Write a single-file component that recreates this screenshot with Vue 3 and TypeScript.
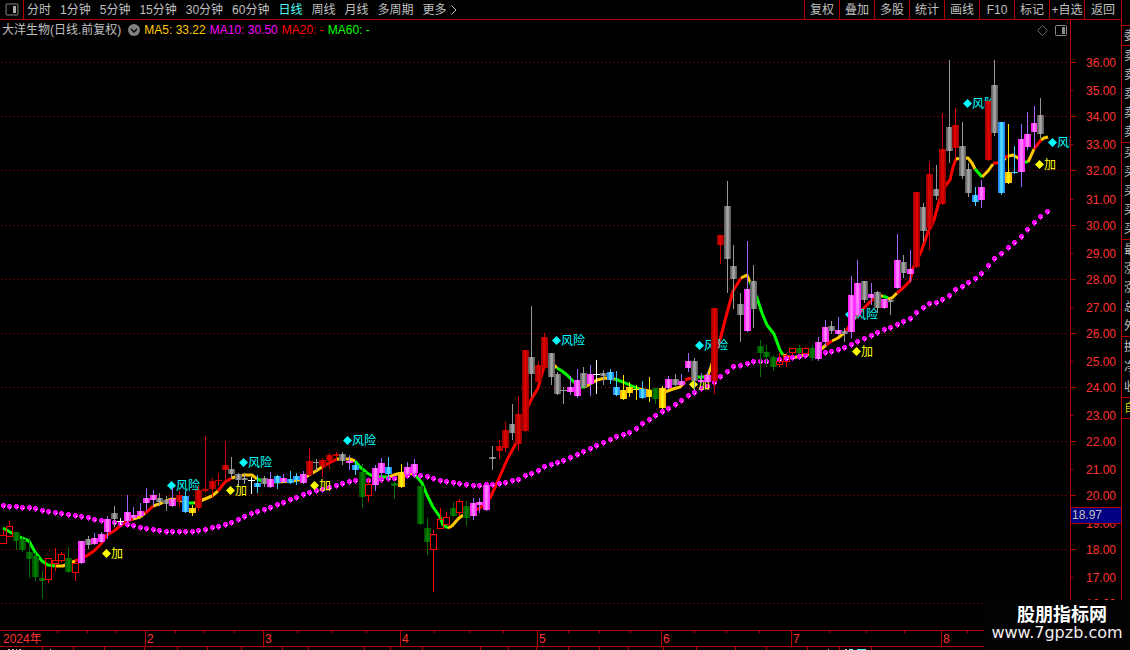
<script setup lang="ts">
type Kind = 'g' | 'r' | 'm' | 'b' | 'y' | 'd' | 'h' | 'w'
type Candle = [x: number, high: number, top: number, bottom: number, low: number, kind: Kind]

const periods = ['分时', '1分钟', '5分钟', '15分钟', '30分钟', '60分钟', '日线', '周线', '月线', '多周期']
const tools = ['复权', '叠加', '多股', '统计', '画线', 'F10', '标记', '+自选', '返回']
const averages = [
  { text: 'MA5: 33.22', tone: 'gold' },
  { text: 'MA10: 30.50', tone: 'magenta' },
  { text: 'MA20: -', tone: 'red' },
  { text: 'MA60: -', tone: 'green' },
]
const quoteGroups = [
  { size: 'one', rows: ['委比'] },
  { size: 'five', rows: ['卖五', '卖四', '卖三', '卖二', '卖一'] },
  { size: 'five', rows: ['买一', '买二', '买三', '买四', '买五'] },
  { size: 'five', rows: ['最新', '涨跌', '涨幅', '总量', '外盘'] },
  { size: 'three', rows: ['换手', '净资', '收益'] },
  { size: 'own', rows: ['自选'] },
]

const gridYs = [62, 116, 170, 225, 279, 333, 387, 441, 495, 549, 603]
const labelYs = [62, 90, 116, 144, 170, 199, 225, 253, 279, 307, 333, 361, 387, 415, 441, 469, 495, 523, 549, 577, 603]
const priceLabels = labelYs.map((y, i) => ({ y, text: (36 - i).toFixed(2), major: i % 2 === 0 }))

const months = [
  { x: 145, text: '2' },
  { x: 263, text: '3' },
  { x: 400, text: '4' },
  { x: 537, text: '5' },
  { x: 661, text: '6' },
  { x: 791, text: '7' },
  { x: 941, text: '8' },
]
const weekTicks = [57, 87, 116, 175, 204, 234, 297, 332, 366, 434, 469, 503, 568, 599, 630, 694, 726, 759, 829, 866, 904, 967]
const lowerTicks = [42, 73, 104, 144, 177, 207, 241, 282, 308, 364, 390, 422, 480, 508, 536, 568, 599, 628, 663, 696, 735, 766, 807, 839, 871]

const candles: Candle[] = [
  [9, 521, 526, 536, 536, 'h'], [16, 532, 532, 541, 549, 'd'], [22, 536, 539, 550, 551, 'd'],
  [29, 538, 552, 559, 577, 'd'], [35, 552, 556, 577, 580, 'd'], [42, 571, 578, 581, 598, 'd'], [48, 558, 558, 579, 583, 'h'],
  [55, 548, 560, 563, 571, 'h'], [61, 552, 554, 560, 562, 'h'], [68, 547, 558, 572, 572, 'd'], [75, 563, 563, 572, 581, 'h'],
  [81, 541, 541, 563, 563, 'm'], [88, 536, 539, 545, 548, 'g'], [94, 533, 538, 544, 544, 'm'], [101, 532, 534, 542, 542, 'm'],
  [107, 516, 519, 532, 538, 'm'], [114, 506, 513, 519, 526, 'g'], [120, 518, 521, 522, 524, 'w'], [127, 495, 512, 521, 521, 'm'],
  [133, 507, 515, 518, 518, 'm'], [140, 503, 511, 516, 516, 'm'], [146, 488, 498, 503, 510, 'm'], [153, 490, 495, 500, 505, 'm'],
  [159, 493, 498, 502, 505, 'g'], [166, 496, 500, 504, 510, 'g'], [172, 487, 499, 506, 506, 'm'], [179, 491, 495, 501, 506, 'r'],
  [185, 491, 496, 512, 512, 'b'], [192, 505, 508, 513, 515, 'y'], [198, 486, 490, 508, 510, 'r'], [205, 436, 489, 491, 491, 'r'],
  [212, 478, 481, 489, 497, 'r'], [218, 473, 480, 481, 485, 'r'], [225, 441, 465, 470, 479, 'r'], [231, 457, 469, 474, 478, 'g'],
  [238, 473, 474, 480, 485, 'g'], [244, 473, 478, 480, 483, 'g'], [251, 477, 480, 481, 493, 'w'], [257, 475, 483, 487, 492, 'b'],
  [264, 476, 478, 484, 486, 'g'], [270, 472, 479, 487, 487, 'm'], [277, 475, 476, 483, 488, 'b'], [283, 474, 478, 482, 482, 'm'],
  [290, 471, 479, 483, 483, 'b'], [296, 473, 476, 480, 484, 'b'], [303, 471, 474, 483, 483, 'm'], [309, 448, 461, 475, 475, 'r'],
  [316, 459, 462, 463, 470, 'g'], [322, 458, 460, 466, 476, 'r'], [329, 453, 455, 461, 468, 'r'], [336, 452, 454, 456, 460, 'r'],
  [342, 452, 454, 461, 464, 'g'], [349, 455, 461, 463, 469, 'm'], [355, 461, 465, 470, 474, 'b'], [362, 464, 472, 497, 507, 'd'],
  [368, 479, 484, 495, 502, 'h'], [375, 465, 468, 485, 490, 'm'], [381, 458, 463, 473, 476, 'm'], [388, 457, 467, 474, 478, 'b'],
  [394, 481, 483, 486, 498, 'd'], [401, 464, 472, 487, 487, 'y'], [407, 462, 467, 474, 474, 'm'], [414, 459, 464, 473, 476, 'm'],
  [420, 486, 486, 524, 524, 'd'], [427, 518, 528, 542, 554, 'd'], [433, 530, 534, 549, 592, 'h'], [440, 508, 519, 528, 528, 'h'],
  [446, 512, 517, 524, 524, 'h'], [453, 502, 508, 516, 516, 'd'], [459, 499, 501, 512, 516, 'h'], [466, 501, 506, 518, 525, 'd'],
  [473, 498, 503, 516, 519, 'm'], [479, 498, 502, 505, 512, 'm'], [486, 485, 485, 510, 510, 'm'], [492, 446, 457, 459, 469, 'g'],
  [499, 440, 446, 451, 458, 'r'], [505, 422, 430, 448, 451, 'r'], [512, 404, 424, 433, 439, 'g'], [518, 396, 414, 444, 450, 'r'],
  [525, 350, 350, 431, 431, 'r'], [531, 306, 357, 374, 396, 'g'], [538, 361, 365, 382, 382, 'r'], [544, 333, 337, 368, 368, 'r'],
  [551, 353, 353, 377, 384, 'g'], [557, 372, 374, 394, 394, 'g'], [563, 387, 390, 391, 403, 'g'], [570, 376, 387, 392, 394, 'm'],
  [577, 369, 380, 396, 397, 'm'], [583, 367, 373, 387, 387, 'g'], [590, 365, 374, 384, 395, 'm'], [596, 360, 374, 375, 393, 'w'],
  [603, 370, 373, 376, 384, 'g'], [610, 369, 372, 380, 383, 'b'], [616, 371, 387, 395, 395, 'b'], [623, 375, 390, 399, 399, 'y'],
  [629, 382, 387, 393, 396, 'y'], [636, 385, 389, 390, 399, 'y'], [642, 381, 389, 398, 398, 'b'], [649, 377, 390, 397, 401, 'y'],
  [655, 388, 388, 399, 403, 'd'], [662, 386, 388, 408, 408, 'y'], [668, 376, 379, 388, 388, 'm'], [675, 374, 379, 385, 385, 'g'],
  [681, 374, 381, 385, 385, 'm'], [688, 353, 361, 368, 371, 'm'], [694, 358, 361, 381, 390, 'g'], [701, 373, 380, 382, 382, 'm'],
  [707, 372, 375, 382, 382, 'm'], [714, 308, 308, 381, 393, 'r'], [720, 235, 235, 245, 263, 'r'], [727, 181, 206, 259, 292, 'g'],
  [733, 245, 266, 279, 308, 'g'], [740, 293, 304, 315, 341, 'g'], [747, 241, 289, 331, 331, 'm'], [753, 265, 281, 309, 327, 'g'],
  [760, 340, 346, 353, 376, 'd'], [766, 345, 352, 357, 366, 'd'], [773, 355, 357, 367, 370, 'd'], [779, 353, 361, 364, 367, 'h'],
  [786, 353, 355, 361, 367, 'h'], [792, 348, 348, 352, 355, 'h'], [799, 345, 348, 353, 353, 'd'], [805, 347, 348, 353, 353, 'h'],
  [812, 345, 348, 358, 360, 'd'], [818, 337, 342, 359, 360, 'm'], [825, 320, 327, 342, 345, 'm'], [831, 321, 326, 331, 333, 'g'],
  [838, 317, 330, 334, 334, 'm'], [844, 328, 331, 334, 341, 'g'], [851, 276, 295, 332, 337, 'm'], [857, 260, 283, 315, 315, 'm'],
  [864, 281, 281, 300, 302, 'g'], [871, 283, 294, 298, 304, 'm'], [877, 291, 292, 308, 312, 'g'], [884, 299, 299, 308, 308, 'm'],
  [890, 298, 300, 302, 314, 'g'], [897, 234, 260, 288, 288, 'm'], [903, 255, 262, 273, 277, 'g'], [910, 250, 269, 274, 281, 'm'],
  [916, 192, 192, 267, 267, 'r'], [923, 203, 207, 231, 241, 'g'], [929, 162, 174, 228, 249, 'r'], [936, 165, 189, 196, 199, 'g'],
  [942, 113, 149, 204, 204, 'r'], [949, 60, 127, 151, 162, 'g'], [955, 108, 125, 148, 159, 'r'], [962, 122, 146, 176, 178, 'g'],
  [968, 163, 169, 193, 196, 'g'], [975, 187, 195, 202, 205, 'b'], [981, 180, 187, 200, 207, 'm'], [988, 101, 101, 160, 160, 'r'],
  [994, 60, 85, 133, 135, 'g'], [1001, 122, 122, 193, 194, 'b'], [1008, 124, 172, 183, 183, 'y'], [1014, 146, 172, 173, 173, 'b'],
  [1021, 124, 139, 172, 186, 'm'], [1027, 112, 134, 147, 149, 'm'], [1034, 106, 123, 132, 147, 'm'], [1040, 98, 115, 134, 137, 'g'],
]

const maSegments: { tone: string; points: string }[] = [
  { tone: 'up', points: '75,561 81,559 88,555 94,551 101,544 107,535 114,531 120,526 127,521 133,519' },
  { tone: 'flat', points: '133,519 140,517 145,513' },
  { tone: 'up', points: '145,513 148,511 153,506' },
  { tone: 'flat', points: '153,506 159,504 166,501 172,499 179,500 186,502' },
  { tone: 'down', points: '186,502 189,503 194,503' },
  { tone: 'flat', points: '194,503 198,502 205,499 212,496 218,491' },
  { tone: 'up', points: '218,491 225,482 232,478' },
  { tone: 'down', points: '3,528 10,532 16,535 22,538 29,541 35,552 42,561 48,565 55,566' },
  { tone: 'flat', points: '55,566 63,566 70,563 75,561' },
  { tone: 'flat', points: '232,478 238,476 244,475 252,475 257,479' },
  { tone: 'down', points: '257,479 265,482 278,482' },
  { tone: 'flat', points: '278,482 293,481 303,479 309,475 316,471 322,467' },
  { tone: 'up', points: '322,467 329,463 337,459' },
  { tone: 'flat', points: '337,459 343,459 350,459 355,461' },
  { tone: 'down', points: '355,461 360,467 367,473 373,476 381,477 389,477' },
  { tone: 'flat', points: '389,477 397,474 405,473 414,474' },
  { tone: 'down', points: '414,474 417,477 422,483 427,495 433,507 440,517 443,525 448,528' },
  { tone: 'flat', points: '448,528 452,526 458,519 463,515' },
  { tone: 'up', points: '463,515 473,511 480,508 490,498 497,483 507,460 516,443 520,431 525,413 531,400 538,388 543,370 546,363' },
  { tone: 'flat', points: '546,363 551,362 557,368' },
  { tone: 'down', points: '557,368 562,371 567,375 573,381 580,387 585,387' },
  { tone: 'flat', points: '585,387 590,384 597,380 605,378 615,379' },
  { tone: 'down', points: '615,379 623,382 632,386 639,389' },
  { tone: 'flat', points: '639,389 649,391 662,393 673,389 680,387 685,382' },
  { tone: 'up', points: '685,380 691,378' },
  { tone: 'down', points: '694,377 704,377' },
  { tone: 'flat', points: '704,377 708,375 711,367 714,357' },
  { tone: 'up', points: '714,357 720,340 727,313 733,291 741,278' },
  { tone: 'flat', points: '741,278 747,275 750,282' },
  { tone: 'down', points: '750,282 757,298 762,313 767,325 774,334 780,350 783,355' },
  { tone: 'flat', points: '783,355 792,358 805,355 818,352 826,345' },
  { tone: 'up', points: '826,345 832,341' },
  { tone: 'flat', points: '832,341 838,338 844,333' },
  { tone: 'up', points: '844,333 847,330 851,323 857,316 863,309 873,299 878,296' },
  { tone: 'flat', points: '878,296 883,296' },
  { tone: 'down', points: '883,296 888,298' },
  { tone: 'flat', points: '888,299 892,298 897,293' },
  { tone: 'up', points: '897,293 903,288 910,281 913,268 921,252 928,232 934,220 940,198 946,185 950,180 953,167 956,159' },
  { tone: 'flat', points: '956,159 962,158 968,158 972,163 975,169' },
  { tone: 'down', points: '975,169 982,177' },
  { tone: 'flat', points: '982,177 988,171 993,164' },
  { tone: 'up', points: '993,163 998,163' },
  { tone: 'flat', points: '998,163 1002,161 1006,158' },
  { tone: 'up', points: '1005,157 1009,156' },
  { tone: 'flat', points: '1009,156 1013,155 1018,158 1023,162' },
  { tone: 'down', points: '1023,162 1028,162' },
  { tone: 'flat', points: '1028,162 1030,158 1034,149' },
  { tone: 'up', points: '1034,149 1041,140' },
  { tone: 'flat', points: '1041,140 1044,138 1048,137' },
]

// Slow average: known levels, interpolated at every trading day.
const slowAnchors: [number, number][] = [
  [3, 505], [9, 506], [29, 507], [35, 508], [42, 510], [55, 512], [68, 514], [81, 516], [101, 520], [114, 522], [127, 524],
  [140, 527], [153, 529], [166, 531], [192, 531], [205, 529], [212, 527], [225, 524], [231, 522], [244, 516], [257, 511],
  [264, 509], [277, 504], [290, 499], [303, 494], [316, 490], [329, 487], [342, 483], [355, 480], [368, 480], [394, 478],
  [414, 474], [427, 476], [440, 480], [453, 482], [466, 484], [479, 485], [492, 484], [505, 482], [518, 479], [525, 475],
  [531, 473], [538, 470], [544, 466], [551, 464], [563, 460], [577, 454], [590, 448], [603, 442], [616, 436], [629, 432],
  [636, 428], [642, 423], [649, 419], [655, 415], [662, 411], [675, 404], [688, 395], [694, 392], [701, 388], [707, 386],
  [714, 382], [720, 376], [727, 371], [733, 366], [747, 363], [753, 361], [766, 361], [779, 359], [792, 357], [805, 355],
  [818, 353], [825, 352], [838, 349], [851, 344], [864, 338], [877, 332], [890, 327], [903, 321], [910, 318], [916, 312],
  [923, 307], [929, 303], [936, 302], [942, 299], [949, 295], [955, 289], [962, 286], [975, 278], [981, 273], [988, 265],
  [994, 258], [1001, 253], [1014, 242], [1021, 236], [1027, 229], [1034, 222], [1040, 216], [1047, 211],
]
function slowLevel(x: number): number {
  const next = slowAnchors.findIndex(([ax]) => ax >= x)
  const [x1, y1] = slowAnchors[next]
  if (next === 0 || x1 === x) return y1
  const [x0, y0] = slowAnchors[next - 1]
  return Math.round(y0 + ((y1 - y0) * (x - x0)) / (x1 - x0))
}
const slowDots = [3, ...candles.map((c) => c[0]), 1047].map((x) => ({ x, y: slowLevel(x) }))

const signals = [
  { x: 171, y: 485, text: '风险', tone: 'risk' },
  { x: 243, y: 462, text: '风险', tone: 'risk' },
  { x: 347, y: 440, text: '风险', tone: 'risk' },
  { x: 556, y: 340, text: '风险', tone: 'risk' },
  { x: 699, y: 345, text: '风险', tone: 'risk' },
  { x: 849, y: 314, text: '风险', tone: 'risk' },
  { x: 967, y: 103, text: '风险', tone: 'risk' },
  { x: 1052, y: 142, text: '风险', tone: 'risk' },
  { x: 106, y: 553, text: '加', tone: 'add' },
  { x: 230, y: 490, text: '加', tone: 'add' },
  { x: 314, y: 485, text: '加', tone: 'add' },
  { x: 693, y: 384, text: '加', tone: 'add' },
  { x: 856, y: 351, text: '加', tone: 'add' },
  { x: 1039, y: 164, text: '加', tone: 'add' },
]
const isShaded = (c: Candle) => c[5] !== 'h' && c[3] - c[2] > 1
</script>

<template>
  <div class="screen">
    <main class="board">
      <nav class="topbar">
        <button class="panel-button" aria-label="侧栏">
          <svg width="14" height="13" viewBox="0 0 14 13">
            <rect x="1" y="1" width="12" height="11" rx="1" fill="none" stroke="#888" />
            <rect x="8" y="3" width="3" height="7" fill="#aaa" />
          </svg>
        </button>
        <div class="periods">
          <button v-for="p in periods" :key="p" :class="{ active: p === '日线' }">{{ p }}</button>
          <button class="more">
            更多
            <svg width="6" height="10" viewBox="0 0 6 10">
              <path d="M0.5 0.5L5 5L0.5 9.5" fill="none" stroke="#c0c0c0" />
            </svg>
          </button>
        </div>
        <div class="tools">
          <button v-for="t in tools" :key="t">{{ t }}</button>
        </div>
      </nav>

      <header class="legend">
        <div class="legend-main">
          <h1>大洋生物(日线.前复权)</h1>
          <button class="expand" aria-label="展开">
            <svg width="12" height="12" viewBox="0 0 12 12">
              <circle cx="6" cy="6" r="6" fill="#808080" />
              <path d="M3 5L6 8L9 5" fill="none" stroke="#000" stroke-width="1.5" />
            </svg>
          </button>
          <span v-for="a in averages" :key="a.text" :class="a.tone">{{ a.text }}</span>
          <div class="legend-icons">
            <svg width="11" height="11" viewBox="0 0 11 11">
              <path d="M5.5 0.5L10.5 5.5L5.5 10.5L0.5 5.5Z" fill="none" stroke="#666" />
            </svg>
            <svg width="12" height="11" viewBox="0 0 12 11">
              <rect x="0.5" y="0.5" width="11" height="10" rx="1" fill="none" stroke="#888" />
              <rect x="7" y="2" width="3" height="7" fill="#888" />
            </svg>
          </div>
        </div>
      </header>

      <svg class="chart" viewBox="0 40 1121 610" role="img" aria-label="日线">
        <defs>
          <clipPath id="plot"><rect x="0" y="40" width="1070" height="590" /></clipPath>
          <linearGradient v-for="k in ['g', 'r', 'm', 'b', 'y', 'd']" :id="'fill-' + k" :key="k" :class="'grad-' + k">
            <stop offset="0" class="edge" />
            <stop offset="0.15" class="edge" />
            <stop offset="0.4" class="core" />
            <stop offset="0.6" class="core" />
            <stop offset="0.85" class="edge" />
            <stop offset="1" class="edge" />
          </linearGradient>
        </defs>

        <g class="lines">
          <line v-for="y in gridYs" :key="y" class="dots" x1="1" :y1="y + 0.5" x2="1067" :y2="y + 0.5" />
          <path class="rule" d="M1070.5 40V630M0 630.5H1121M0 646.5H1121" />
          <path v-for="l in priceLabels" :key="l.y" class="rule" :d="`M1070 ${l.y + 0.5}h${l.major ? 6 : 3}`" />
          <path v-for="m in months" :key="m.x" class="rule" :d="`M${m.x + 0.5} 630V646`" />
          <path v-for="x in weekTicks" :key="x" class="rule" :d="`M${x + 0.5} 630v3`" />
          <path v-for="x in lowerTicks" :key="x" class="rule" :d="`M${x + 0.5} 646v4`" />
          <path class="under-white" d="M8 649.5h2M12 649.5h2M16 649.5h1M19 649.5h2M50 649.5h1M828 649.5h1M845 649.5h2" />
          <path class="under-cyan" d="M849 649.5h4M857 649.5h9" />
        </g>

        <g class="axis-text">
          <text v-for="l in priceLabels" :key="l.y" x="1086" :y="l.y + 5">{{ l.text }}</text>
          <text x="3" y="643">2024年</text>
          <text v-for="m in months" :key="m.x" :x="m.x + 2" y="643">{{ m.text }}</text>
        </g>
        <rect x="1071" y="507" width="50" height="17" class="marker" />
        <path class="rule" d="M1071 507.5H1121M1071 523.5H1121" />
        <text x="1072" y="519" class="marker-text">18.97</text>

        <g clip-path="url(#plot)">
          <polyline v-for="(s, i) in maSegments" :key="i" :points="s.points" :class="['fast', s.tone]" />
          <g v-for="d in slowDots" :key="d.x" class="slow">
            <path :d="`M${d.x - 1} ${d.y - 2}h3v1h1v3h-1v1h-1v1h-1v-1h-1v-1h-1v-3h1z`" />
            <rect :x="d.x + 1" :y="d.y + 1" width="1" height="1" />
          </g>
          <g v-for="s in signals" :key="s.x" :class="s.tone">
            <path :d="`M${s.x + 0.5} ${s.y - 4}l4.5 4.5l-4.5 4.5l-4.5 -4.5z`" />
            <text :x="s.x + 5" :y="s.y + 5">{{ s.text }}</text>
          </g>
          <g class="candles">
            <path class="h" d="M3.5 530V535M0 535.5H6M0 543.5H6M6.5 535V544" />
            <g v-for="c in candles" :key="c[0]" :class="c[5]">
              <template v-if="c[5] === 'h'">
                <path :d="`M${c[0] + 0.5} ${c[1]}V${c[2]}M${c[0] + 0.5} ${c[3]}V${c[4]}`" />
                <rect :x="c[0] - 2.5" :y="c[2] + 0.5" width="6" :height="c[3] - c[2]" />
              </template>
              <template v-else>
                <path :d="`M${c[0] + 0.5} ${c[1]}V${c[4] + 1}`" />
                <rect v-if="isShaded(c)" :x="c[0] - 3" :y="c[2]" width="7" :height="c[3] - c[2]" :fill="`url(#fill-${c[5]})`" />
                <path v-else :d="`M${c[0] - 3} ${c[2] + 0.5}h7`" />
              </template>
            </g>
          </g>
        </g>
      </svg>
    </main>

    <aside class="quotes">
      <section v-for="(g, i) in quoteGroups" :key="i" :class="g.size">
        <span v-for="r in g.rows" :key="r">{{ r }}</span>
      </section>
    </aside>

    <div class="site">
      <strong>股朋指标网</strong>
      <span>www.7gpzb.com</span>
    </div>
  </div>
</template>

<style>
body {
  background: #000;
}
</style>

<style scoped>
.screen {
  position: relative;
  display: grid;
  grid-template-columns: minmax(0, 1fr) 9px;
  min-height: 100vh;
  overflow: hidden;
  background: #000;
  color: #c0c0c0;
  font: 12px/16px "Liberation Sans", "Noto Sans CJK SC", sans-serif;
}
button {
  padding: 0;
  border: 0;
  background: none;
  color: inherit;
  font: inherit;
  white-space: nowrap;
}
.topbar {
  display: flex;
  height: 19px;
  border-bottom: 1px solid #b40000;
}
.panel-button {
  display: flex;
  align-items: center;
  justify-content: center;
  flex: 0 0 24px;
  border-right: 1px solid #b40000;
}
.periods {
  display: flex;
  flex: 1;
  gap: 9px;
  padding-left: 3px;
}
.periods .active {
  color: #54fcfc;
}
.more {
  display: flex;
  align-items: center;
  gap: 4px;
}
.tools {
  display: flex;
}
.tools button {
  width: 35px;
  border-left: 1px solid #b40000;
}
.tools button:last-child {
  width: 37px;
}
.legend {
  height: 20px;
  padding-right: 50px;
}
.legend-main {
  display: flex;
  align-items: center;
  gap: 4px;
  height: 20px;
  padding-left: 2px;
  border-right: 1px solid #b40000;
}
h1 {
  margin: 0;
  padding-right: 3px;
  font-size: 12px;
  font-weight: 400;
  line-height: 16px;
}
.expand {
  display: flex;
}
.gold {
  color: #ffc800;
}
.magenta {
  color: #f0f;
}
.red {
  color: #f00;
}
.green {
  color: #0f0;
}
.legend-icons {
  display: flex;
  gap: 7px;
  margin-left: auto;
  padding-right: 3px;
}
.chart {
  display: block;
  width: 100%;
}
.rule {
  fill: none;
  stroke: #b40000;
}
.dots {
  stroke: #a80000;
  stroke-dasharray: 1 3;
}
.lines,
.candles,
.slow {
  shape-rendering: crispEdges;
}
.under-white {
  stroke: #c0c0c0;
}
.under-cyan {
  stroke: #54fcfc;
}
.axis-text {
  fill: #ff3232;
}
.marker {
  fill: #000080;
}
.marker-text {
  fill: #c0c0c0;
}
.fast {
  fill: none;
  stroke-width: 3;
  stroke-linejoin: round;
}
.fast.up {
  stroke: #f00;
}
.fast.down {
  stroke: #0f0;
}
.fast.flat {
  stroke: #ffc800;
}
.slow path {
  fill: #f0f;
}
.slow rect {
  fill: #fff;
}
.risk {
  fill: #0ff;
}
.add {
  fill: #ff0;
}
.candles path,
.h rect {
  fill: none;
}
.g path {
  stroke: #969696;
}
.r path {
  stroke: #d00000;
}
.m path {
  stroke: #a064ff;
}
.b path {
  stroke: #40c8ff;
}
.y path {
  stroke: #ffe600;
}
.d path {
  stroke: #007000;
}
.w path {
  stroke: #fff;
}
.h path,
path.h,
.h rect {
  stroke: #f00;
}
.grad-g .edge {
  stop-color: #606060;
}
.grad-g .core {
  stop-color: #a4a4a4;
}
.grad-r .edge {
  stop-color: #a00000;
}
.grad-r .core {
  stop-color: #e00000;
}
.grad-m .edge {
  stop-color: #ff20ff;
}
.grad-m .core {
  stop-color: #ff80ff;
}
.grad-b .edge {
  stop-color: #1e8cff;
}
.grad-b .core {
  stop-color: #50dcff;
}
.grad-y .edge {
  stop-color: #ffb400;
}
.grad-y .core {
  stop-color: #fff000;
}
.grad-d .edge {
  stop-color: #005000;
}
.grad-d .core {
  stop-color: #008000;
}
.quotes {
  overflow: hidden;
  padding-top: 25px;
  border-left: 1px solid #b40000;
}
.quotes section {
  display: flex;
  flex-direction: column;
  justify-content: space-around;
  box-sizing: border-box;
  padding-left: 2px;
  border-top: 1px solid #b40000;
  white-space: nowrap;
}
.one {
  height: 20px;
}
.five {
  height: 97px;
}
.three {
  height: 61px;
}
.quotes .own {
  height: 22px;
  border-bottom: 1px solid #b40000;
  color: #c8c800;
}
.site {
  position: absolute;
  right: 0;
  bottom: 0;
  display: flex;
  flex-direction: column;
  align-items: center;
  box-sizing: border-box;
  width: 146px;
  height: 50px;
  padding-top: 3px;
  background: #020202;
  color: #f4eef0;
  font: 16px/20px "DejaVu Sans", sans-serif;
}
.site strong {
  padding-left: 10px;
  color: #fff;
  font: 700 18px/20px "Noto Sans CJK SC", sans-serif;
}
</style>
